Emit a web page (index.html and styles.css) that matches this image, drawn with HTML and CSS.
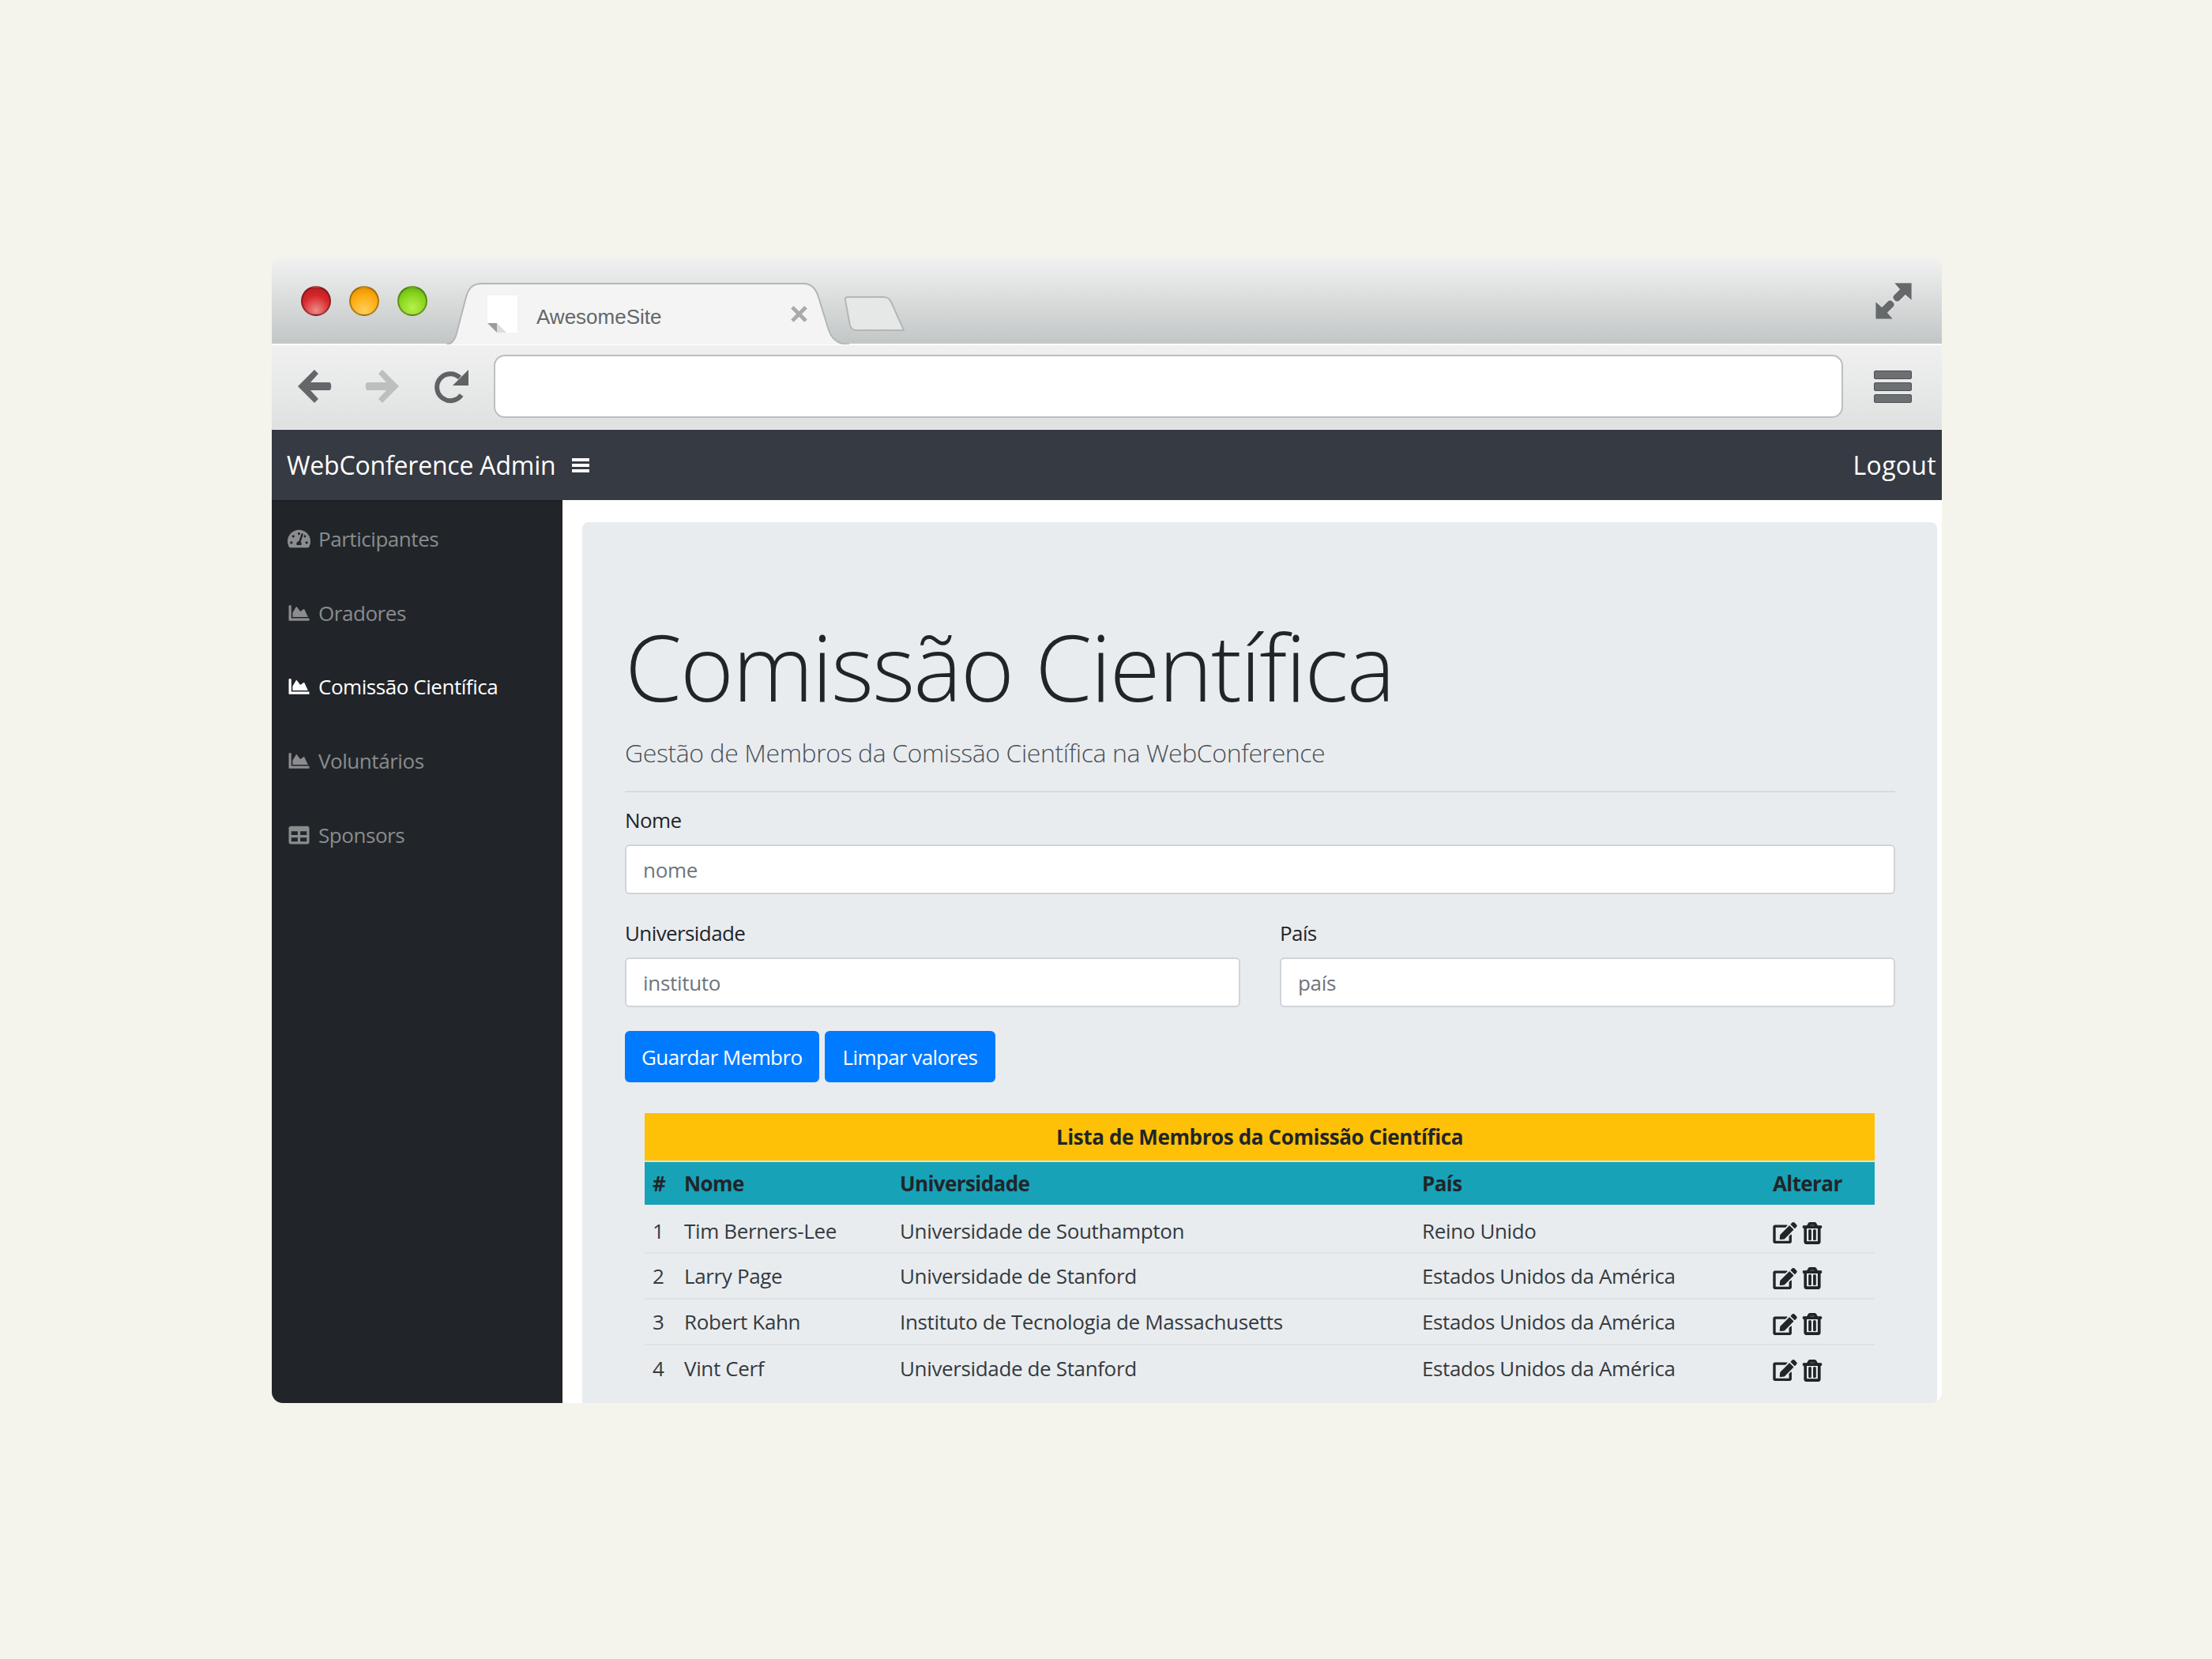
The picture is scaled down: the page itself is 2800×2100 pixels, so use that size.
FILE: index.html
```html
<!DOCTYPE html>
<html>
	<head>
		<meta charset="utf-8">
		<title>WebConference Admin</title>
		<link rel="stylesheet" href="styles.css">
	</head>
	<body>
		<!-- icones usados mais do que uma vez -->
		<svg class="defs">
			<symbol id="i_chart" viewBox="0 0 512 512"><path d="M500 384c6.6 0 12 5.4 12 12v40c0 6.6-5.4 12-12 12H12c-6.6 0-12-5.4-12-12V76c0-6.6 5.4-12 12-12h40c6.6 0 12 5.4 12 12v308h436zM372.7 159.5L288 216l-85.3-113.7c-5.1-6.8-15.5-6.3-19.9 1L96 248v104h384l-89.9-187.8c-3.2-6.5-11.4-8.7-17.4-4.7z"/></symbol>
			<symbol id="i_edit" viewBox="0 0 576 512"><path d="M402.6 83.2l90.2 90.2c3.8 3.8 3.8 10 0 13.8L274.4 405.6l-92.8 10.3c-12.4 1.4-22.9-9.1-21.5-21.5l10.3-92.8L388.8 83.2c3.8-3.8 10-3.8 13.8 0zm162-22.9l-48.8-48.8c-15.2-15.2-39.9-15.2-55.2 0l-35.4 35.4c-3.8 3.8-3.8 10 0 13.8l90.2 90.2c3.8 3.8 10 3.8 13.8 0l35.4-35.4c15.2-15.3 15.2-40 0-55.2zM384 346.2V448H64V128h229.8c3.2 0 6.2-1.3 8.5-3.5l40-40c7.6-7.6 2.2-20.5-8.5-20.5H48C21.5 64 0 85.5 0 112v352c0 26.5 21.5 48 48 48h352c26.5 0 48-21.5 48-48V306.2c0-10.7-12.9-16-20.5-8.5l-40 40c-2.2 2.3-3.5 5.3-3.5 8.5z"/></symbol>
			<symbol id="i_trash" viewBox="-12 -12 472 536"><path d="M268 416h24a12 12 0 0 0 12-12V188a12 12 0 0 0-12-12h-24a12 12 0 0 0-12 12v216a12 12 0 0 0 12 12zM432 80h-82.41l-34-56.7A48 48 0 0 0 274.41 0H173.59a48 48 0 0 0-41.16 23.3L98.41 80H16A16 16 0 0 0 0 96v16a16 16 0 0 0 16 16h16v336a48 48 0 0 0 48 48h288a48 48 0 0 0 48-48V128h16a16 16 0 0 0 16-16V96a16 16 0 0 0-16-16zM171.84 50.91A6 6 0 0 1 177 48h94a6 6 0 0 1 5.15 2.91L293.61 80H154.39zM368 464H80V128h288zm-212-48h24a12 12 0 0 0 12-12V188a12 12 0 0 0-12-12h-24a12 12 0 0 0-12 12v216a12 12 0 0 0 12 12z" stroke="#212529" stroke-width="22"/></symbol>
		</svg>
		<div class="window">
			<!-- barra de tabs -->
			<div class="tabbar">
				<div class="lights">
					<span class="light red"></span>
					<span class="light amber"></span>
					<span class="light green"></span>
				</div>
				<div class="tab">
					<svg class="tab_shape" viewBox="0 0 512 78" preserveAspectRatio="none">
						<path d="M0 78C8 78 12 70 14 60L25 18C28 7 33 1 45 1H452C462 1 468 8 471 18L484 60C488 72 496 78 510 78Z" fill="#f4f4f4"/>
						<path d="M0 78C8 78 12 70 14 60L25 18C28 7 33 1 45 1H452C462 1 468 8 471 18L484 60C488 72 496 78 510 78" fill="none" stroke="#b4b6b6" stroke-width="2"/>
					</svg>
					<svg class="favicon" viewBox="0 0 38 47"><path d="M0 0H38V47H12L0 35Z" fill="#fff"/><path d="M0 35H12V47Z" fill="#9b9d9d"/><path d="M12 35L24 47H12Z" fill="#dcdcdc"/></svg>
					<span class="tab_title">AwesomeSite</span>
					<svg class="tab_close" viewBox="0 0 24 24"><path d="M3 3L21 21M21 3L3 21" stroke="#a9abab" stroke-width="5"/></svg>
				</div>
				<svg class="newtab" viewBox="0 0 78 44"><path d="M2 5C1 2 3 1 6 1H50C55 1 58 3 60 7L76 43H16C11 43 9 40 8 37Z" fill="#e6e7e7" stroke="#b4b6b6" stroke-width="2"/></svg>
				<svg class="expand" viewBox="0 0 45 45"><path d="M23 0H45V22L37 15L30 22C28 24 25 24 23 21C21 19 21 17 23 15L30 8ZM22 45H0V23L8 30L15 23C17 21 20 21 22 24C24 26 24 28 22 30L15 37Z" fill="#65696b" stroke="#fff" stroke-width=".6"/></svg>
			</div>
			<!-- barra de endereco -->
			<div class="toolbar">
				<svg class="tool" viewBox="0 0 44 44"><path d="M22 1L1 22L22 43L27 38L17 27H41C44 27 44 17 41 17H17L27 6Z" fill="#63676a"/></svg>
				<svg class="tool" viewBox="0 0 44 44"><path d="M22 1L43 22L22 43L17 38L27 27H3C0 27 0 17 3 17H27L17 6Z" fill="#bdbfbf"/></svg>
				<svg class="tool" viewBox="0 0 44 44"><path d="M35 33A17 17 0 1 1 33 11" fill="none" stroke="#5f6366" stroke-width="6"/><path d="M44 1V21H24Z" fill="#5f6366"/></svg>
				<div class="urlbar"></div>
				<div class="menu">
					<span></span>
					<span></span>
					<span></span>
				</div>
			</div>
			<!-- navbar -->
			<div class="navbar">
				<a class="brand" href="#">WebConference Admin</a>
				<svg class="nav_toggle" viewBox="0 0 22 20"><path d="M0 1H22V5H0ZM0 8H22V12H0ZM0 15H22V19H0Z" fill="#fff"/></svg>
				<a class="logout" href="#">Logout</a>
			</div>
			<div class="wrapper">
				<ul class="sidebar">
					<li>
						<a href="#">
							<svg class="side_icon" viewBox="0 0 576 512"><path d="M288 32C128.94 32 0 160.94 0 320c0 52.8 14.25 102.26 39.06 144.8 5.61 9.62 16.3 15.2 27.44 15.2h443c11.14 0 21.83-5.58 27.44-15.2C561.75 422.26 576 372.8 576 320c0-159.06-128.94-288-288-288zm0 64c14.71 0 26.58 10.13 30.32 23.65-1.11 2.26-2.64 4.23-3.45 6.67l-9.22 27.67c-5.13 3.49-10.97 6.01-17.64 6.01-17.67 0-32-14.33-32-32S270.33 96 288 96zM96 384c-17.67 0-32-14.33-32-32s14.33-32 32-32 32 14.33 32 32-14.33 32-32 32zm48-160c-17.67 0-32-14.33-32-32s14.33-32 32-32 32 14.33 32 32-14.33 32-32 32zm246.77-72.41l-61.33 184C343.13 347.33 352 364.54 352 384c0 11.72-3.38 22.55-8.88 32H232.88c-5.5-9.45-8.88-20.28-8.88-32 0-33.94 26.5-61.43 59.9-63.59l61.34-184.01c4.17-12.56 17.73-19.45 30.36-15.17 12.57 4.19 19.35 17.79 15.17 30.36zm14.66 57.2l15.52-46.55c3.47-1.29 7.13-2.23 11.05-2.23 17.67 0 32 14.33 32 32s-14.33 32-32 32c-11.38-.01-20.89-6.28-26.57-15.22zM480 384c-17.67 0-32-14.33-32-32s14.33-32 32-32 32 14.33 32 32-14.33 32-32 32z"/></svg>
							Participantes
						</a>
					</li>
					<li>
						<a href="#"><svg class="side_icon"><use href="#i_chart"/></svg>Oradores</a>
					</li>
					<li class="active">
						<a href="#"><svg class="side_icon"><use href="#i_chart"/></svg>Comissão Científica</a>
					</li>
					<li>
						<a href="#"><svg class="side_icon"><use href="#i_chart"/></svg>Voluntários</a>
					</li>
					<li>
						<a href="#">
							<svg class="side_icon" viewBox="0 0 512 512"><path d="M464 32H48C21.49 32 0 53.49 0 80v352c0 26.51 21.49 48 48 48h416c26.51 0 48-21.49 48-48V80c0-26.51-21.49-48-48-48zM224 416H64v-96h160v96zm0-160H64v-96h160v96zm224 160H288v-96h160v96zm0-160H288v-96h160v96z"/></svg>
							Sponsors
						</a>
					</li>
				</ul>
				<div class="content">
					<div class="jumbotron">
						<h1 class="display">Comissão Científica</h1>
						<p class="lead">Gestão de Membros da Comissão Científica na WebConference</p>
						<hr>
						<form>
							<div class="field">
								<label>Nome</label>
								<input type="text" placeholder="nome">
							</div>
							<div class="form_row">
								<div class="field">
									<label>Universidade</label>
									<input type="text" placeholder="instituto">
								</div>
								<div class="field">
									<label>País</label>
									<input type="text" placeholder="país">
								</div>
							</div>
							<div class="buttons">
								<button type="button" class="btn">Guardar Membro</button>
								<button type="button" class="btn btn_second">Limpar valores</button>
							</div>
						</form>
						<table class="members">
							<colgroup>
								<col class="col_num">
								<col class="col_nome">
								<col class="col_uni">
								<col class="col_pais">
								<col>
							</colgroup>
							<thead>
								<tr class="title_row"><th colspan="5">Lista de Membros da Comissão Científica</th></tr>
								<tr class="head_row">
									<th>#</th>
									<th>Nome</th>
									<th>Universidade</th>
									<th>País</th>
									<th>Alterar</th>
								</tr>
							</thead>
							<tbody>
								<tr>
									<td>1</td>
									<td>Tim Berners-Lee</td>
									<td>Universidade de Southampton</td>
									<td>Reino Unido</td>
									<td><svg class="act_edit"><use href="#i_edit"/></svg> <svg class="act_trash"><use href="#i_trash"/></svg></td>
								</tr>
								<tr>
									<td>2</td>
									<td>Larry Page</td>
									<td>Universidade de Stanford</td>
									<td>Estados Unidos da América</td>
									<td><svg class="act_edit"><use href="#i_edit"/></svg> <svg class="act_trash"><use href="#i_trash"/></svg></td>
								</tr>
								<tr>
									<td>3</td>
									<td>Robert Kahn</td>
									<td>Instituto de Tecnologia de Massachusetts</td>
									<td>Estados Unidos da América</td>
									<td><svg class="act_edit"><use href="#i_edit"/></svg> <svg class="act_trash"><use href="#i_trash"/></svg></td>
								</tr>
								<tr>
									<td>4</td>
									<td>Vint Cerf</td>
									<td>Universidade de Stanford</td>
									<td>Estados Unidos da América</td>
									<td><svg class="act_edit"><use href="#i_edit"/></svg> <svg class="act_trash"><use href="#i_trash"/></svg></td>
								</tr>
							</tbody>
						</table>
					</div>
				</div>
			</div>
		</div>
	</body>
</html>
```
FILE: styles.css
```css
*{ margin: 0; padding: 0; box-sizing: border-box; list-style-type: none; text-decoration: none; }
html{ background-color: #f4f4ec; }
body{ padding: 325px 0 0 344px; font-family: "Open Sans", "Noto Sans", sans-serif; font-size: 26px; color: #212529; }
.defs{ display: none; }

/* janela do browser */
.window{ width: 2114px; height: 1451px; display: flex; flex-direction: column; border-radius: 14px; overflow: hidden; }
.tabbar{ height: 110px; flex: none; display: flex; align-items: flex-start; background: linear-gradient(#f2f2f2, #c2c6c6); }
.lights{ display: flex; gap: 23px; margin: 37px 0 0 37px; }
.light{ width: 38px; height: 38px; border-radius: 50%; border: 2px solid rgba(0,0,0,.3); }
.red{ background: radial-gradient(circle at 50% 85%, #ee8a8a, #d8272b 55%, #a81c20); }
.amber{ background: radial-gradient(circle at 50% 85%, #ffcf5e, #fda90c 60%, #d08a0a); }
.green{ background: radial-gradient(circle at 50% 75%, #b8f04e, #84d41a 60%, #5d9c1c); }
.tab{ position: relative; width: 512px; height: 78px; margin: 33px 0 0 24px; display: flex; align-items: center; padding: 0 52px; }
.tab_shape{ position: absolute; left: 0; top: 0; width: 100%; height: 100%; }
.favicon{ position: relative; width: 38px; height: 47px; flex: none; }
.tab_title{ position: relative; margin-left: 24px; font-family: "Liberation Sans", Arial, sans-serif; font-size: 26px; color: #63676a; padding-top: 9px; }
.tab_close{ position: relative; width: 23px; height: 23px; margin-left: auto; margin-right: 2px; }
.newtab{ width: 78px; height: 44px; margin: 50px 0 0 -9px; }
.expand{ width: 46px; height: 46px; margin: 33px 38px 0 auto; }

.toolbar{ height: 108px; flex: none; display: flex; align-items: center; padding: 0 38px 2px 32px; background: linear-gradient(#f0f0f0, #dfe1e1); border-top: 2px solid #fff; }
.tool{ width: 44px; height: 44px; margin-right: 42px; flex: none; }
.tool:nth-child(2){ margin-right: 43px; }
.tool:nth-child(3){ margin-right: 32px; }
.urlbar{ flex: 1; height: 80px; background-color: #fff; border: 2px solid #bdbebe; border-radius: 14px; }
.menu{ width: 48px; margin-left: 39px; display: flex; flex-direction: column; gap: 4px; }
.menu span{ height: 11px; background-color: #6c7073; border: 1px solid #4d5053; border-radius: 2px; }

/* navbar */
.navbar{ height: 89px; flex: none; display: flex; align-items: center; padding: 0 7px 0 19px; background-color: #363a42; margin-top: 1px; }
.brand{ color: #fff; font-size: 32px; letter-spacing: -.2px; }
.nav_toggle{ width: 22px; height: 20px; margin-left: 21px; }
.logout{ color: #fff; font-size: 32px; margin-left: auto; letter-spacing: .3px; }

.wrapper{ flex: 1; min-height: 0; display: flex; }
.sidebar{ width: 368px; flex: none; background-color: #212529; border-top: 2px solid #1b1e22; }
.sidebar li{ height: 93.7px; display: flex; align-items: center; }
.sidebar a{ display: flex; align-items: center; padding-left: 20px; color: #8a8c8e; font-size: 26px; letter-spacing: -.45px; }
.side_icon{ width: 29px; height: 26px; margin-right: 10px; fill: #8a8c8e; }
.sidebar .active a{ color: #fff; }
.sidebar .active .side_icon{ fill: #fff; }

.content{ flex: 1; min-width: 0; background-color: #fff; padding: 28px 6px 0 25px; overflow: hidden; }
.jumbotron{ background-color: #e9ecef; border-radius: 8px 8px 0 0; padding: 113px 53px 0 54px; height: 100%; }
.display{ font-size: 116px; font-weight: 300; line-height: 1.2; letter-spacing: -1.9px; }
.lead{ font-size: 32px; font-weight: 300; margin-top: 18px; color: #495057; letter-spacing: -.4px; }
hr{ border: 0; border-top: 2px solid #d8dbde; margin: 27px 0 17px; }

/* formulario */
.field{ flex: 1; }
.field label{ display: block; font-size: 26px; line-height: 36px; margin-bottom: 13px; letter-spacing: -.6px; }
.field input{ display: block; width: 100%; height: 63px; border: 2px solid #ced4da; border-radius: 6px; padding: 0 21px; font-family: inherit; font-size: 26px; letter-spacing: -.3px; background-color: #fff; }
.field input::placeholder{ color: #6c757d; opacity: 1; }
.form_row{ display: flex; gap: 50px; margin-top: 31px; }
.buttons{ display: flex; gap: 7px; margin-top: 30px; }
.btn{ height: 65px; padding: 0 21px; background-color: #007bff; color: #fff; border: 0; border-radius: 6px; font-family: inherit; font-size: 26px; letter-spacing: -.6px; }
.btn_second{ padding: 0 23px; }

/* tabela */
.members{ width: 1557px; margin: 39px 0 0 25px; border-collapse: collapse; table-layout: fixed; }
.members th, .members td{ text-align: left; padding: 0 0 0 10px; font-size: 26px; letter-spacing: -.36px; }
.col_num{ width: 40px; }
.col_nome{ width: 273px; }
.col_uni{ width: 661px; }
.col_pais{ width: 444px; }
.members .title_row th{ height: 61px; background-color: #ffc107; text-align: center; padding: 0; border-bottom: 2px solid #dee2e6; letter-spacing: -.38px; }
.members .head_row th{ height: 55px; background-color: #17a2b8; letter-spacing: -.6px; }
.members td{ height: 58px; border-bottom: 2px solid #dee2e6; color: #343a40; }
.members tbody tr:first-child td{ height: 61px; padding-top: 5px; }
.members tr:last-child td{ border-bottom: 0; }
.act_edit{ width: 31px; height: 27px; fill: #212529; vertical-align: middle; }
.act_trash{ width: 26px; height: 28px; fill: #212529; vertical-align: middle; }
```
